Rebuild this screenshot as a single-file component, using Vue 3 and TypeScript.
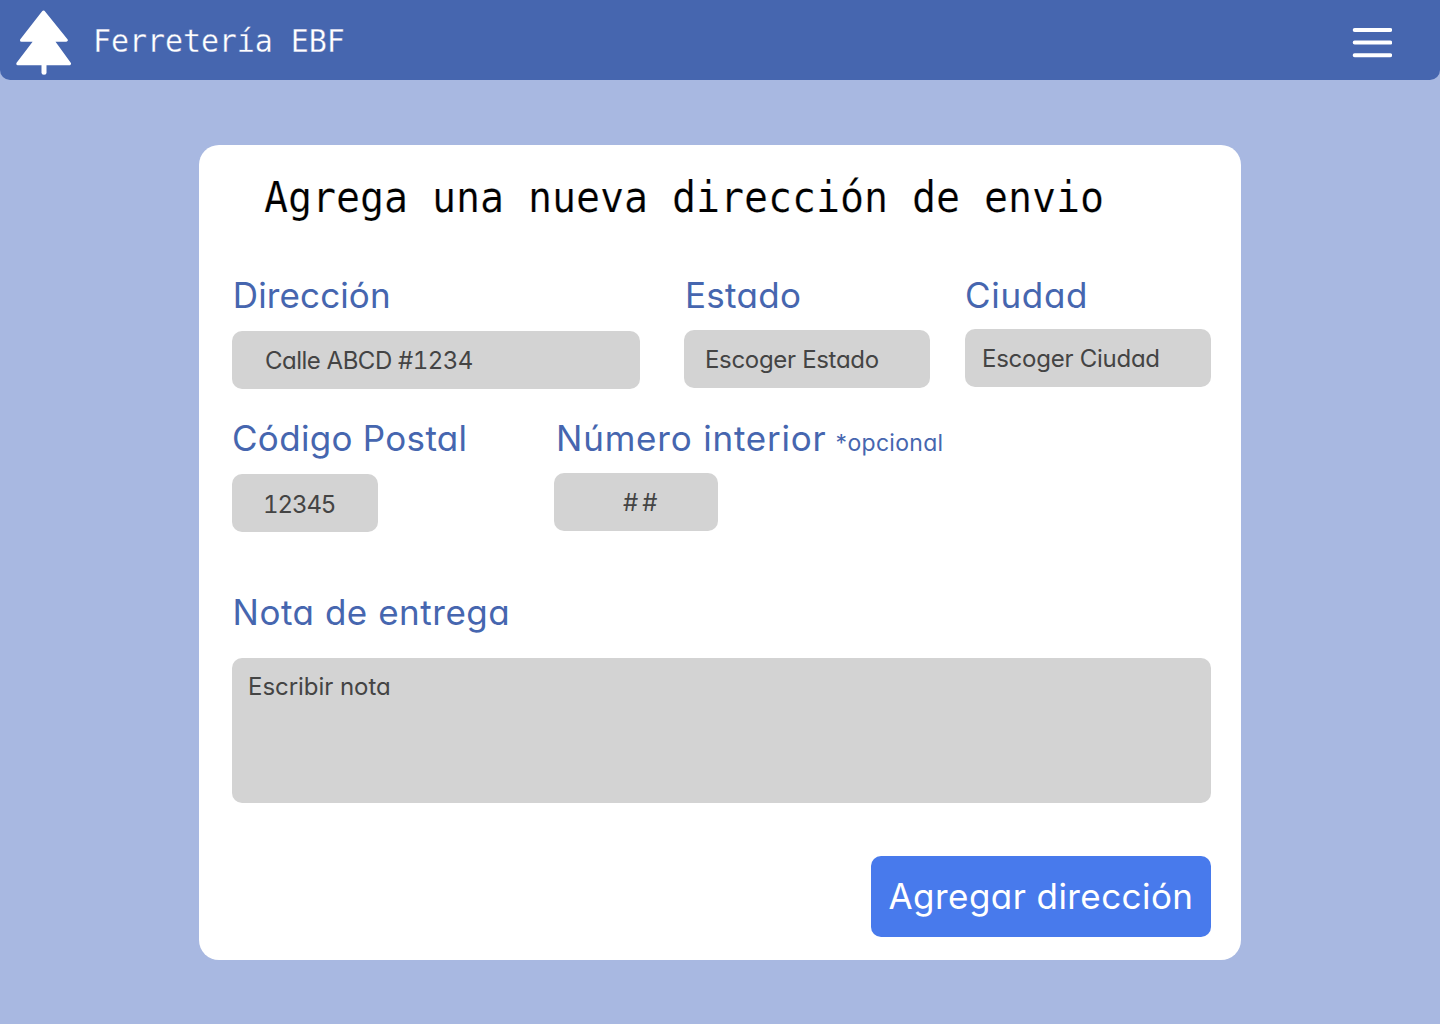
<script setup lang="ts">
import { reactive } from 'vue'

interface Field {
  id: string
  label: string
  hint?: string
  placeholder: string
}

const rows: Field[][] = [
  [
    { id: 'direccion', label: 'Dirección', placeholder: 'Calle ABCD #1234' },
    { id: 'estado', label: 'Estado', placeholder: 'Escoger Estado' },
    { id: 'ciudad', label: 'Ciudad', placeholder: 'Escoger Ciudad' },
  ],
  [
    { id: 'postal', label: 'Código Postal', placeholder: '12345' },
    { id: 'interior', label: 'Número interior', hint: '*opcional', placeholder: '##' },
  ],
]

const form = reactive<Record<string, string>>({
  direccion: '',
  estado: '',
  ciudad: '',
  postal: '',
  interior: '',
  nota: '',
})
</script>

<template>
  <div class="page">
    <header class="bar">
      <svg class="tree" width="56" height="66" viewBox="0 0 56 66" aria-hidden="true">
        <g fill="#fff" stroke="#fff" stroke-linejoin="round" stroke-linecap="round">
          <path d="M27.500 2 50.300 30.200H36.500L53.500 53.700H1.800L19.700 30.200H5.500Z" stroke-width="3" />
          <path d="M28 54v8.300" stroke-width="5" />
        </g>
      </svg>
      <span class="brand">Ferretería EBF</span>
      <button class="menu" type="button" aria-label="Menú">
        <svg width="40" height="32" viewBox="0 0 40 32" fill="none" stroke="#fff" stroke-width="4" stroke-linecap="round">
          <path d="M2.700 2.900h35.500M2.700 15.600h35.500M2.700 28.300h35.500" />
        </svg>
      </button>
    </header>

    <form class="card" @submit.prevent>
      <h1 class="title">Agrega una nueva dirección de envio</h1>
      <div v-for="(row, i) in rows" :key="i" class="row">
        <div v-for="f in row" :key="f.id" class="field" :class="f.id">
          <label :for="f.id"><span class="name">{{ f.label }}</span><small v-if="f.hint">{{ f.hint }}</small></label>
          <input :id="f.id" v-model="form[f.id]" type="text" :placeholder="f.placeholder" />
        </div>
      </div>
      <div class="field nota">
        <label for="nota"><span class="name">Nota de entrega</span></label>
        <textarea id="nota" v-model="form.nota" placeholder="Escribir nota"></textarea>
      </div>
      <button class="submit" type="submit"><span>Agregar dirección</span></button>
    </form>
  </div>
</template>

<style>
body {
  margin: 0;
  background: #a8b8e1;
}
</style>

<style scoped>
.page {
  width: 1440px;
  height: 1024px;
  overflow: hidden;
  background: #a8b8e1;
  font-family: Inter, sans-serif;
  font-feature-settings: 'cv11' 1;
}
.bar {
  display: flex;
  align-items: center;
  box-sizing: border-box;
  height: 80px;
  padding: 5px 48px 0 15.500px;
  background: #4666af;
  border-radius: 0 0 10px 10px;
}
.tree {
  flex: none;
}
.brand {
  margin: -3px 0 0 21.500px;
  font: 30px/40px 'DejaVu Sans Mono', monospace;
  letter-spacing: -0.08px;
  color: #fff;
  -webkit-text-stroke: 0.3px #4666af;
  transform: translateY(0.500px) scaleY(1.05);
}
.menu {
  display: flex;
  margin-left: auto;
  padding: 0;
  border: 0;
  background: none;
}
.card {
  display: flex;
  flex-direction: column;
  box-sizing: border-box;
  width: 1042px;
  height: 815px;
  margin: 65px 0 0 199px;
  padding: 25px 30px 23px 33px;
  background: #fff;
  border-radius: 20px;
}
.title {
  margin: 0 0 47px 32px;
  font: 400 40px/56px 'DejaVu Sans Mono', monospace;
  letter-spacing: -0.08px;
  color: #000;
  -webkit-text-stroke: 0.2px #fff;
  transform: translateY(-0.400px) scaleY(1.05);
}
.row {
  display: flex;
  height: 143px;
}
.field {
  display: flex;
  flex-direction: column;
}
label {
  height: 44px;
  font-size: 35px;
  line-height: 45px;
  letter-spacing: 0.3px;
  white-space: nowrap;
  color: #4666af;
}
label small {
  margin-left: 9px;
  font-size: 23px;
  letter-spacing: 0.3px;
}
input,
textarea {
  box-sizing: border-box;
  width: 100%;
  height: 58px;
  margin: 14px 0 0;
  padding: 0;
  border: 0;
  border-radius: 10px;
  outline: 0;
  resize: none;
  background: #d3d3d3;
  color: #444;
  font: 24px/29px Inter, sans-serif;
  font-feature-settings: 'cv11' 1;
}
input::placeholder,
textarea::placeholder {
  color: #444;
  opacity: 1;
}
.direccion {
  width: 408px;
  margin-right: 44px;
}
.direccion label {
  padding-left: 0.800px;
  letter-spacing: 0.12px;
}
.direccion input {
  padding-left: 33px;
  letter-spacing: -0.5px;
  word-spacing: 0.3px;
  font-feature-settings: 'cv11' 1, 'tnum' 1;
}
.estado {
  width: 246px;
  margin-right: 35px;
}
.estado label {
  padding-left: 1px;
}
.estado input {
  margin-top: 13px;
  padding-left: 21px;
  letter-spacing: -0.32px;
}
.ciudad {
  width: 246px;
}
.ciudad label {
  letter-spacing: 0.7px;
}
.ciudad input {
  margin-top: 12px;
  padding-left: 17px;
  letter-spacing: -0.25px;
}
.postal {
  width: 146px;
  margin-right: 176px;
}
.postal input {
  padding: 2px 0 0 31px;
  letter-spacing: -1.100px;
  font-feature-settings: 'cv11' 1, 'tnum' 1;
}
.interior {
  width: 164px;
}
.interior label {
  padding-left: 2px;
  letter-spacing: 0.8px;
}
.interior input {
  margin-top: 13px;
  padding-left: 69px;
  letter-spacing: 4px;
}
.nota {
  margin-top: 31px;
}
.nota label {
  padding-left: 0.500px;
  letter-spacing: 0.53px;
}
.nota textarea {
  height: 145px;
  margin-top: 24px;
  padding: 14px 16px;
  letter-spacing: -0.04px;
}
.submit {
  align-self: flex-end;
  width: 340px;
  height: 81px;
  margin-top: auto;
  padding: 0 0 2px;
  border: 0;
  border-radius: 10px;
  background: #487aec;
  color: #fff;
  font: 35px/44px Inter, sans-serif;
  font-feature-settings: 'cv11' 1;
  letter-spacing: 0.43px;
  white-space: nowrap;
}
</style>
